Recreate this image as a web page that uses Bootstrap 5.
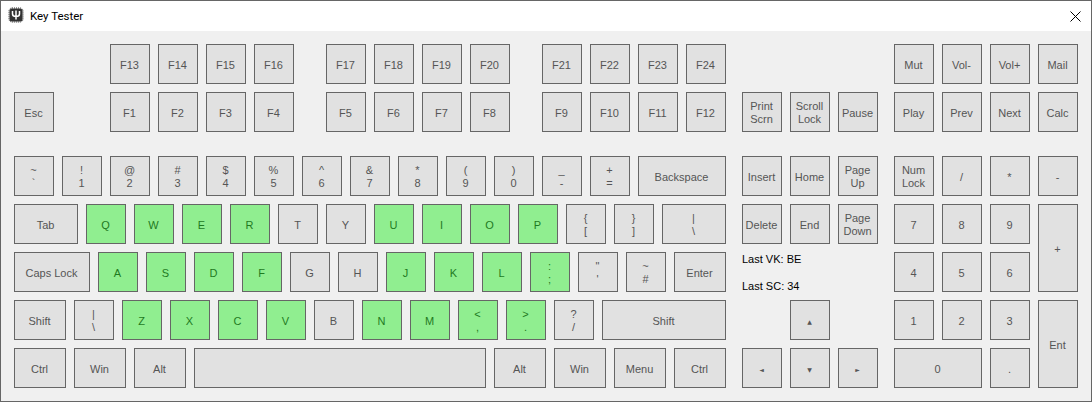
<!DOCTYPE html>
<html lang="en">
<head>
    <meta charset="UTF-8">
    <title>Key Tester</title>
    <link href="https://cdn.jsdelivr.net/npm/bootstrap@5.3.0/dist/css/bootstrap.min.css" rel="stylesheet">
    <style>
        body { background: #f0f0f0; font-family: "Liberation Sans", Arial, sans-serif; overflow: hidden; }
        .app-window { height: 402px; border: 1px solid #666; }
        .title-bar { height: 30px; background: #fff; padding-left: 7px; padding-right: 10px; font: 11.5px "Roboto", "Liberation Sans", sans-serif; color: #000; }
        .title-icon { margin-right: 6px; margin-top: -2px; }
        .keyboard { padding: 13px 13px 0 13px; }
        .btn.keycap {
            flex: none; width: 40px; height: 40px; padding: 2px 1px 0 0;
            border: 1px solid #666; border-radius: 0;
            background: #e1e1e1; color: #555;
            font: 11px/13px "Liberation Sans", Arial, sans-serif;
        }
        .btn.keycap.down { background: #90ee90; color: #1f7a1f; }
        .btn.keycap.w52 { width: 52px; }
        .btn.keycap.w64 { width: 64px; }
        .btn.keycap.w76 { width: 76px; }
        .btn.keycap.w88 { width: 88px; }
        .btn.keycap.w124 { width: 124px; }
        .btn.keycap.w292 { width: 292px; }
        .btn.keycap.tall { height: 88px; grid-row: span 2; }
        .btn.keycap.wide { width: 88px; grid-column: span 2; }
        .arrow-glyph { font-size: 6px; font-family: "DejaVu Sans", sans-serif; }
        .main-col { width: 712px; }
        .nav-col { width: 136px; }
        .numpad { grid-template-columns: repeat(4, 40px); }
        .group-gap { margin-left: 24px; }
        .esc-gap { margin-left: 48px; }
        .f-gap { margin-left: 96px; }
        .up-gap { margin-left: 48px; }
        .status-box { height: 41px; margin-bottom: -1px; padding-top: 1px; font-size: 11px; line-height: 13px; color: #000; }
    </style>
</head>
<body>

<div class="app-window d-flex flex-column">
    <!-- title bar -->
    <div class="title-bar d-flex align-items-center">
        <svg width="16" height="16" viewBox="0 0 16 16" class="title-icon">
            <rect x="1.5" y="1.5" width="13" height="13" rx="2.5" fill="#333"/>
            <rect x="1" y="1" width="14" height="14" rx="3" fill="none" stroke="#333" stroke-width="1" stroke-dasharray="1 1"/>
            <path d="M8 3.5V12.5M4.5 4V7Q4.5 9.5 8 9.5Q11.5 9.5 11.5 7V4" fill="none" stroke="#fff" stroke-width="1.5"/>
        </svg>
        <span class="flex-grow-1">Key Tester</span>
        <svg width="11" height="11" viewBox="0 0 11 11">
            <path d="M0.5 0.5L10.5 10.5M10.5 0.5L0.5 10.5" stroke="#000" stroke-width="1" fill="none"/>
        </svg>
    </div>

    <div class="keyboard">
        <!-- function keys -->
        <div class="d-flex gap-3">
            <div class="main-col d-flex flex-column gap-2">
                <div class="d-flex gap-2">
                    <button type="button" class="btn keycap f-gap">F13</button>
                    <button type="button" class="btn keycap">F14</button>
                    <button type="button" class="btn keycap">F15</button>
                    <button type="button" class="btn keycap">F16</button>
                    <button type="button" class="btn keycap group-gap">F17</button>
                    <button type="button" class="btn keycap">F18</button>
                    <button type="button" class="btn keycap">F19</button>
                    <button type="button" class="btn keycap">F20</button>
                    <button type="button" class="btn keycap group-gap">F21</button>
                    <button type="button" class="btn keycap">F22</button>
                    <button type="button" class="btn keycap">F23</button>
                    <button type="button" class="btn keycap">F24</button>
                </div>
                <div class="d-flex gap-2">
                    <button type="button" class="btn keycap">Esc</button>
                    <button type="button" class="btn keycap esc-gap">F1</button>
                    <button type="button" class="btn keycap">F2</button>
                    <button type="button" class="btn keycap">F3</button>
                    <button type="button" class="btn keycap">F4</button>
                    <button type="button" class="btn keycap group-gap">F5</button>
                    <button type="button" class="btn keycap">F6</button>
                    <button type="button" class="btn keycap">F7</button>
                    <button type="button" class="btn keycap">F8</button>
                    <button type="button" class="btn keycap group-gap">F9</button>
                    <button type="button" class="btn keycap">F10</button>
                    <button type="button" class="btn keycap">F11</button>
                    <button type="button" class="btn keycap">F12</button>
                </div>
            </div>
            <div class="nav-col d-flex align-items-end gap-2">
                <button type="button" class="btn keycap">Print<br>Scrn</button>
                <button type="button" class="btn keycap">Scroll<br>Lock</button>
                <button type="button" class="btn keycap">Pause</button>
            </div>
            <div class="d-grid numpad gap-2">
                <button type="button" class="btn keycap">Mut</button>
                <button type="button" class="btn keycap">Vol-</button>
                <button type="button" class="btn keycap">Vol+</button>
                <button type="button" class="btn keycap">Mail</button>
                <button type="button" class="btn keycap">Play</button>
                <button type="button" class="btn keycap">Prev</button>
                <button type="button" class="btn keycap">Next</button>
                <button type="button" class="btn keycap">Calc</button>
            </div>
        </div>

        <!-- main block -->
        <div class="d-flex gap-3 mt-4">
            <div class="main-col d-flex flex-column gap-2">
                <div class="d-flex gap-2">
                    <button type="button" class="btn keycap">~<br>`</button>
                    <button type="button" class="btn keycap">!<br>1</button>
                    <button type="button" class="btn keycap">@<br>2</button>
                    <button type="button" class="btn keycap">#<br>3</button>
                    <button type="button" class="btn keycap">$<br>4</button>
                    <button type="button" class="btn keycap">%<br>5</button>
                    <button type="button" class="btn keycap">^<br>6</button>
                    <button type="button" class="btn keycap">&amp;<br>7</button>
                    <button type="button" class="btn keycap">*<br>8</button>
                    <button type="button" class="btn keycap">(<br>9</button>
                    <button type="button" class="btn keycap">)<br>0</button>
                    <button type="button" class="btn keycap">_<br>-</button>
                    <button type="button" class="btn keycap">+<br>=</button>
                    <button type="button" class="btn keycap w88">Backspace</button>
                </div>
                <div class="d-flex gap-2">
                    <button type="button" class="btn keycap w64">Tab</button>
                    <button type="button" class="btn keycap down">Q</button>
                    <button type="button" class="btn keycap down">W</button>
                    <button type="button" class="btn keycap down">E</button>
                    <button type="button" class="btn keycap down">R</button>
                    <button type="button" class="btn keycap">T</button>
                    <button type="button" class="btn keycap">Y</button>
                    <button type="button" class="btn keycap down">U</button>
                    <button type="button" class="btn keycap down">I</button>
                    <button type="button" class="btn keycap down">O</button>
                    <button type="button" class="btn keycap down">P</button>
                    <button type="button" class="btn keycap">{<br>[</button>
                    <button type="button" class="btn keycap">}<br>]</button>
                    <button type="button" class="btn keycap w64">|<br>\</button>
                </div>
                <div class="d-flex gap-2">
                    <button type="button" class="btn keycap w76">Caps Lock</button>
                    <button type="button" class="btn keycap down">A</button>
                    <button type="button" class="btn keycap down">S</button>
                    <button type="button" class="btn keycap down">D</button>
                    <button type="button" class="btn keycap down">F</button>
                    <button type="button" class="btn keycap">G</button>
                    <button type="button" class="btn keycap">H</button>
                    <button type="button" class="btn keycap down">J</button>
                    <button type="button" class="btn keycap down">K</button>
                    <button type="button" class="btn keycap down">L</button>
                    <button type="button" class="btn keycap down">:<br>;</button>
                    <button type="button" class="btn keycap">"<br>'</button>
                    <button type="button" class="btn keycap">~<br>#</button>
                    <button type="button" class="btn keycap w52">Enter</button>
                </div>
                <div class="d-flex gap-2">
                    <button type="button" class="btn keycap w52">Shift</button>
                    <button type="button" class="btn keycap">|<br>\</button>
                    <button type="button" class="btn keycap down">Z</button>
                    <button type="button" class="btn keycap down">X</button>
                    <button type="button" class="btn keycap down">C</button>
                    <button type="button" class="btn keycap down">V</button>
                    <button type="button" class="btn keycap">B</button>
                    <button type="button" class="btn keycap down">N</button>
                    <button type="button" class="btn keycap down">M</button>
                    <button type="button" class="btn keycap down">&lt;<br>,</button>
                    <button type="button" class="btn keycap down">&gt;<br>.</button>
                    <button type="button" class="btn keycap">?<br>/</button>
                    <button type="button" class="btn keycap w124">Shift</button>
                </div>
                <div class="d-flex gap-2">
                    <button type="button" class="btn keycap w52">Ctrl</button>
                    <button type="button" class="btn keycap w52">Win</button>
                    <button type="button" class="btn keycap w52">Alt</button>
                    <button type="button" class="btn keycap w292"></button>
                    <button type="button" class="btn keycap w52">Alt</button>
                    <button type="button" class="btn keycap w52">Win</button>
                    <button type="button" class="btn keycap w52">Menu</button>
                    <button type="button" class="btn keycap w52">Ctrl</button>
                </div>
            </div>

            <!-- navigation cluster and status -->
            <div class="nav-col d-flex flex-column gap-2">
                <div class="d-flex gap-2">
                    <button type="button" class="btn keycap">Insert</button>
                    <button type="button" class="btn keycap">Home</button>
                    <button type="button" class="btn keycap">Page<br>Up</button>
                </div>
                <div class="d-flex gap-2">
                    <button type="button" class="btn keycap">Delete</button>
                    <button type="button" class="btn keycap">End</button>
                    <button type="button" class="btn keycap">Page<br>Down</button>
                </div>
                <div class="status-box d-flex flex-column justify-content-between">
                    <div>Last VK: BE</div>
                    <div>Last SC: 34</div>
                </div>
                <div class="d-flex">
                    <button type="button" class="btn keycap up-gap"><span class="arrow-glyph">▲</span></button>
                </div>
                <div class="d-flex gap-2">
                    <button type="button" class="btn keycap"><span class="arrow-glyph">◄</span></button>
                    <button type="button" class="btn keycap"><span class="arrow-glyph">▼</span></button>
                    <button type="button" class="btn keycap"><span class="arrow-glyph">►</span></button>
                </div>
            </div>

            <!-- numpad -->
            <div class="d-grid numpad gap-2">
                <button type="button" class="btn keycap">Num<br>Lock</button>
                <button type="button" class="btn keycap">/</button>
                <button type="button" class="btn keycap">*</button>
                <button type="button" class="btn keycap">-</button>
                <button type="button" class="btn keycap">7</button>
                <button type="button" class="btn keycap">8</button>
                <button type="button" class="btn keycap">9</button>
                <button type="button" class="btn keycap tall">+</button>
                <button type="button" class="btn keycap">4</button>
                <button type="button" class="btn keycap">5</button>
                <button type="button" class="btn keycap">6</button>
                <button type="button" class="btn keycap">1</button>
                <button type="button" class="btn keycap">2</button>
                <button type="button" class="btn keycap">3</button>
                <button type="button" class="btn keycap tall">Ent</button>
                <button type="button" class="btn keycap wide">0</button>
                <button type="button" class="btn keycap">.</button>
            </div>
        </div>
    </div>
</div>

</body>
</html>
